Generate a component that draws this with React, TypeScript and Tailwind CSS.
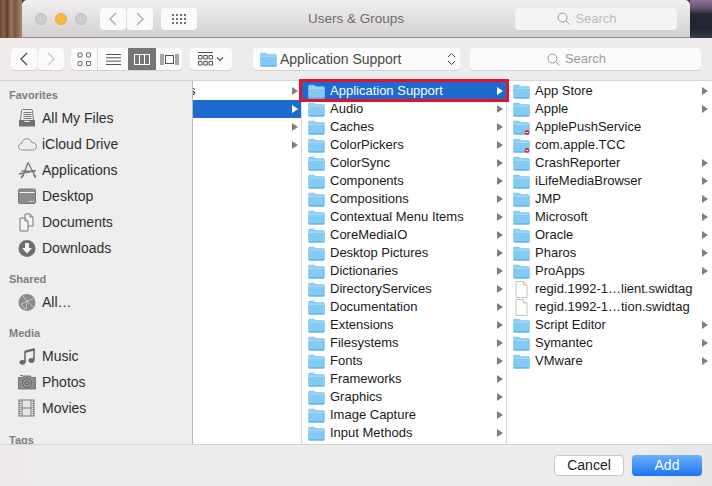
import type { ReactNode } from "react";

const font = "font-['Liberation_Sans','Noto_Sans',sans-serif]";

const col1 = [
  { name: "s", arrow: true },
  { name: "", arrow: true, active: true },
  { name: "", arrow: true },
  { name: "", arrow: true },
];

const col2 = [
  "Application Support",
  "Audio",
  "Caches",
  "ColorPickers",
  "ColorSync",
  "Components",
  "Compositions",
  "Contextual Menu Items",
  "CoreMediaIO",
  "Desktop Pictures",
  "Dictionaries",
  "DirectoryServices",
  "Documentation",
  "Extensions",
  "Filesystems",
  "Fonts",
  "Frameworks",
  "Graphics",
  "Image Capture",
  "Input Methods",
];

type Item = { name: string; kind?: "locked" | "file" };

const col3: Item[] = [
  { name: "App Store" },
  { name: "Apple" },
  { name: "ApplePushService", kind: "locked" },
  { name: "com.apple.TCC", kind: "locked" },
  { name: "CrashReporter" },
  { name: "iLifeMediaBrowser" },
  { name: "JMP" },
  { name: "Microsoft" },
  { name: "Oracle" },
  { name: "Pharos" },
  { name: "ProApps" },
  { name: "regid.1992-1…lient.swidtag", kind: "file" },
  { name: "regid.1992-1…tion.swidtag", kind: "file" },
  { name: "Script Editor" },
  { name: "Symantec" },
  { name: "VMware" },
];

function FolderIcon({ locked }: { locked?: boolean }) {
  return (
    <svg width="17" height="15" viewBox="0 0 17 15" className="shrink-0">
      <path d="M.5 2.200C.5 1.500 1 1 1.700 1h4c.5 0 .8.2 1.100.6l.7.9h8c.6 0 1 .4 1 1v9.900c0 .6-.4 1-1 1H1.500c-.6 0-1-.4-1-1z" fill="#8fd0f5" stroke="#79bfe9" strokeWidth=".5" />
      <path d="M.7 4.200h15.600v9.200c0 .5-.3.8-.8.8h-14c-.5 0-.8-.3-.8-.8z" fill="#84cbf4" />
      <path d="M.7 4.200h15.600v.8H.7z" fill="#a9dcf8" />
      <path d="M.7 13.200h15.600v.5c0 .3-.3.5-.8.5h-14c-.5 0-.8-.2-.8-.5z" fill="#5fb1e6" />
      {locked && <circle cx="14" cy="12.400" r="2.300" fill="#d8252c" />}
      {locked && <path d="M12.700 12h2.600v.9h-2.600z" fill="#fff" />}
    </svg>
  );
}

function FileIcon() {
  return (
    <svg width="17" height="17" viewBox="0 0 17 17" className="shrink-0">
      <path d="M3 .5h7.500L14 4v12.500H3z" fill="#fff" stroke="#c4c4c4" />
      <path d="M10.500.5V4H14" fill="#f1f1f1" stroke="#c4c4c4" />
    </svg>
  );
}

function Arrow({ white }: { white?: boolean }) {
  return (
    <svg width="6" height="8" viewBox="0 0 6 8" className="shrink-0">
      <path d="M0 0l6 4-6 4z" fill={white ? "#ffffff" : "#808080"} />
    </svg>
  );
}

function SidebarRow({ icon, label }: { icon: ReactNode; label: string }) {
  return (
    <div className="flex h-[26px] items-center pl-[18px]">
      <span className="flex w-[24px] shrink-0 items-center">{icon}</span>
      <span className="text-[14px] text-[#2e2e2e]">{label}</span>
    </div>
  );
}

function SidebarHead({ label, className }: { label: string; className: string }) {
  return <div className={`pl-[9px] text-[11px] leading-[13px] font-bold text-[#7f7f7f] ${className}`}>{label}</div>;
}

function Glyph({ children }: { children: ReactNode }) {
  return (
    <svg width="19" height="19" viewBox="0 0 19 19" className="overflow-visible">
      {children}
    </svg>
  );
}

const g = "#777777";

const icons: Record<string, ReactNode> = {
  files: (
    <Glyph>
      <path d="M3.500 1.500c0-.5.4-1 1-1h9c.6 0 1 .5 1 1l1 10h-13z" fill="#efefef" stroke={g} />
      <path d="M5.500 3.500h8M5.500 5.500h8M5.500 7.500h8M5.500 9.500h8" stroke={g} />
      <path d="M1 11h4.500l1 2h5l1-2H17v5.500c0 .6-.4 1-1 1H2c-.6 0-1-.4-1-1z" fill="#6f6f6f" />
    </Glyph>
  ),
  cloud: (
    <Glyph>
      <path d="M4.500 15C2 15 .5 13.500.5 11.600c0-1.900 1.500-3 3-3 .4-2.600 2.800-5 5.500-5 2.500 0 4.300 1.900 4.800 4 2.300-.3 4.700 1.300 4.700 4 0 2.100-1.600 3.400-3.500 3.400z" fill="none" stroke="#858585" strokeWidth=".9" />
    </Glyph>
  ),
  apps: (
    <Glyph>
      <path d="M10 1.500L5 15M10 1.500L17 15M1 13l17-3.500M3.500 10l13 .5" fill="none" stroke={g} strokeWidth="1.300" />
      <path d="M3 17l2.500-3M17.500 16.500L16 13.500" stroke={g} strokeWidth="1.800" />
    </Glyph>
  ),
  desktop: (
    <Glyph>
      <rect x=".5" y="2" width="17" height="14.500" rx="1.500" fill="#8c8c8c" stroke={g} />
      <rect x="1.500" y="5" width="15" height="1" fill="#f2f2f2" />
      <path d="M11 14h1v1h-1zM13 14h1v1h-1zM15 14h1v1h-1z" fill="#f2f2f2" />
    </Glyph>
  ),
  docs: (
    <Glyph>
      <path d="M7 1h5l3 3v9H7z" fill="#f2f2f2" stroke={g} />
      <path d="M2 5h5l3 3v10H2z" fill="#f2f2f2" stroke={g} />
      <path d="M7 5v3h3M12 1v3h3" fill="#dddddd" stroke={g} />
    </Glyph>
  ),
  downloads: (
    <Glyph>
      <circle cx="9" cy="9.500" r="8.500" fill="#6f6f6f" />
      <path d="M7 4h4v5h3l-5 5.500L4 9h3z" fill="#f4f4f4" />
    </Glyph>
  ),
  all: (
    <Glyph>
      <circle cx="9" cy="9.500" r="8.500" fill="#8a8a8a" />
      <path d="M5 3l4 5 6-2M9 8l-6 3 5 6 1-9 6 6" fill="none" stroke="#d6d6d6" strokeWidth=".8" />
    </Glyph>
  ),
  music: (
    <Glyph>
      <path d="M7 3.500L16.500 1v2.500L7 6z" fill="#6a6a6a" />
      <path d="M7 4v11M16 2v11" stroke="#6a6a6a" strokeWidth="1.600" />
      <ellipse cx="4.500" cy="15.300" rx="3" ry="2.400" fill="#6a6a6a" />
      <ellipse cx="13.500" cy="13.500" rx="3" ry="2.400" fill="#6a6a6a" />
    </Glyph>
  ),
  photos: (
    <Glyph>
      <path d="M.5 4.500h4l1-1.500h7l1 1.500h4v11.500H.5z" fill="#8c8c8c" stroke={g} />
      <path d="M2 2h3v1H2z" fill={g} />
      <circle cx="9" cy="10" r="4.300" fill="#b8b8b8" stroke="#555555" />
      <circle cx="9" cy="10" r="2.300" fill="#8c8c8c" stroke="#555555" />
    </Glyph>
  ),
  movies: (
    <Glyph>
      <rect x="1" y="1" width="15" height="16" fill="#e6e6e6" stroke={g} />
      <path d="M4 1v16M13 1v16M4 9h9" stroke={g} />
      <path d="M1.800 2v14.500M15.200 2v14.500" stroke={g} strokeWidth="1.400" strokeDasharray="1 1" />
    </Glyph>
  ),
};

function Btn({ className = "", children }: { className?: string; children?: ReactNode }) {
  return (
    <div className={`flex h-[22px] items-center justify-center rounded-[4px] bg-[#fbfbfb] shadow-[0_1px_0_#d2d2d2] ${className}`}>
      {children}
    </div>
  );
}

function Chevron({ dir, color }: { dir: "l" | "r"; color: string }) {
  return (
    <svg width="10" height="14" viewBox="0 0 10 14">
      <path d={dir === "l" ? "M8 1L2 7l6 6" : "M2 1l6 6-6 6"} fill="none" stroke={color} strokeWidth="1.300" />
    </svg>
  );
}

function Dots() {
  return (
    <svg width="15" height="10" viewBox="0 0 15 10" fill="#6f6f6f">
      <path d="M0 0h2v2H0zM4 0h2v2H4zM8 0h2v2H8zM12 0h2v2h-2zM0 4h2v2H0zM4 4h2v2H4zM8 4h2v2H8zM12 4h2v2h-2zM0 8h2v2H0zM4 8h2v2H4zM8 8h2v2H8zM12 8h2v2h-2z" />
    </svg>
  );
}

function Magnifier() {
  return (
    <svg width="13" height="13" viewBox="0 0 13 13" fill="none" stroke="#9a9a9a" strokeWidth="1">
      <circle cx="5.500" cy="5.500" r="4.500" />
      <path d="M9 9l3.500 3.500" />
    </svg>
  );
}

function TitleBar() {
  return (
    <div className="flex h-[38px] shrink-0 bg-[#3d3035]">
      <div className="w-[22px] bg-[linear-gradient(90deg,#6e4636_0px,#8a6450_4px,#5e3c2e_7px,#9a7660_11px,#7a5442_15px,#a88874_22px)]" />
      <div className="flex flex-1 items-center rounded-t-[5px] border-b border-b-[#8f8c8c] bg-[linear-gradient(180deg,#f1efef,#d3d0d0)] pl-[13px]">
        <div className="flex gap-[8px]">
          <span className="size-[12px] rounded-full border border-[#bdbdbd] bg-[#cfcdcd]" />
          <span className="size-[12px] rounded-full border border-[#e5a93a] bg-[#fcb940]" />
          <span className="size-[12px] rounded-full border border-[#bdbdbd] bg-[#cfcdcd]" />
        </div>
        <Btn className="ml-[13px] w-[26px]"><Chevron dir="l" color="#a9a9a9" /></Btn>
        <Btn className="ml-[1px] w-[26px]"><Chevron dir="r" color="#a9a9a9" /></Btn>
        <Btn className="ml-[8px] w-[36px]"><Dots /></Btn>
        <div className="w-[318px] pt-[1px] text-center text-[13.500px] text-[#6f6b6b]">Users &amp; Groups</div>
        <Btn className="w-[162px] gap-[5px] !bg-[#f4f3f3] pr-[18px]">
          <Magnifier />
          <span className="text-[13px] text-[#bdbdbd]">Search</span>
        </Btn>
      </div>
      <div className="w-[22px] bg-[linear-gradient(180deg,#8a6f95_0%,#6d5878_18%,#232733_38%,#1e2430_75%,#3a3d44_100%)]" />
    </div>
  );
}

function Toolbar() {
  return (
    <div className="flex h-[42px] shrink-0 items-center bg-[linear-gradient(90deg,#f0eaea,#ededed_30%,#eeecee)] pl-[11px]">
      <Btn className="w-[26px]"><Chevron dir="l" color="#4e4e4e" /></Btn>
      <Btn className="ml-[1px] w-[26px]"><Chevron dir="r" color="#c9c9c9" /></Btn>
      <Btn className="ml-[7px] w-[111px] !justify-start overflow-hidden">
        <span className="flex h-full w-[27px] items-center justify-center border-r border-r-[#dddddd]">
          <svg width="15" height="15" viewBox="0 0 15 15" fill="none" stroke="#666666">
            <rect x="1" y="1" width="4" height="4" rx=".5" />
            <rect x="9.500" y="1" width="4" height="4" rx=".5" />
            <rect x="1" y="9.500" width="4" height="4" rx=".5" />
            <rect x="9.500" y="9.500" width="4" height="4" rx=".5" />
          </svg>
        </span>
        <span className="flex h-full w-[30px] items-center justify-center">
          <svg width="15" height="11" viewBox="0 0 15 11" stroke="#555555">
            <path d="M0 .5h15M0 3.800h15M0 7.100h15M0 10.500h15" />
          </svg>
        </span>
        <span className="flex h-full w-[28px] items-center justify-center bg-[#757575]">
          <svg width="17" height="11" viewBox="0 0 17 11" fill="none" stroke="#ffffff">
            <rect x=".5" y=".5" width="15" height="10" />
            <path d="M5.500 0v11M10.500 0v11" />
          </svg>
        </span>
        <span className="flex h-full w-[26px] items-center justify-center">
          <svg width="19" height="11" viewBox="0 0 19 11" fill="none" stroke="#555555">
            <rect x="5.500" y="1.500" width="8" height="8" />
            <path d="M1 0v11M3 0v11M16 0v11M18 0v11" />
          </svg>
        </span>
      </Btn>
      <Btn className="ml-[8px] w-[42px] gap-[3px]">
        <svg width="15" height="14" viewBox="0 0 15 14" fill="none" stroke="#555555">
          <path d="M0 .5h15" />
          <path d="M.5 3.500h3.500v3.500H.5zM5.800 3.500h3.500v3.500H5.800zM11 3.500h3.500v3.500H11zM.5 9.500h3.500v3.500H.5zM5.800 9.500h3.500v3.500H5.800zM11 9.500h3.500v3.500H11z" />
        </svg>
        <svg width="8" height="5" viewBox="0 0 8 5" fill="none" stroke="#555555" strokeWidth="1.200">
          <path d="M1 .5l3 3 3-3" />
        </svg>
      </Btn>
      <Btn className="ml-[21px] w-[207px] !justify-start pl-[7px]">
        <FolderIcon />
        <span className="ml-[3px] flex-1 text-[14px] text-[#4a4a4a]">Application Support</span>
        <svg width="9" height="14" viewBox="0 0 9 14" fill="none" stroke="#444444" className="mr-[4px]">
          <path d="M1 5l3.500-3.500L8 5M1 9l3.500 3.500L8 9" />
        </svg>
      </Btn>
      <Btn className="ml-[10px] w-[231px] gap-[5px] pr-[18px]">
        <Magnifier />
        <span className="text-[13px] text-[#9d9d9d]">Search</span>
      </Btn>
    </div>
  );
}

function Sidebar() {
  return (
    <aside className="w-[193px] shrink-0 overflow-hidden border-r border-r-[#b9b9b9] bg-[#eeeeee] pt-[8px]">
      <SidebarHead label="Favorites" className="mb-[3px]" />
      <SidebarRow icon={icons.files} label="All My Files" />
      <SidebarRow icon={icons.cloud} label="iCloud Drive" />
      <SidebarRow icon={icons.apps} label="Applications" />
      <SidebarRow icon={icons.desktop} label="Desktop" />
      <SidebarRow icon={icons.docs} label="Documents" />
      <SidebarRow icon={icons.downloads} label="Downloads" />
      <SidebarHead label="Shared" className="mt-[12px] mb-[3px]" />
      <SidebarRow icon={icons.all} label="All…" />
      <SidebarHead label="Media" className="mt-[12px] mb-[3px]" />
      <SidebarRow icon={icons.music} label="Music" />
      <SidebarRow icon={icons.photos} label="Photos" />
      <SidebarRow icon={icons.movies} label="Movies" />
      <SidebarHead label="Tags" className="mt-[13px]" />
    </aside>
  );
}

function Columns() {
  return (
    <div className="relative flex min-w-0 flex-1 bg-white pt-[1px] text-[13px] text-[#1a1a1a]">
      {/* first column is scrolled sideways, only the tail of a name shows */}
      <div className="w-[109px] shrink-0 overflow-hidden border-r border-r-[#d9d9d9]">
        {col1.map((r, i) => (
          <div key={i} className={`flex h-[18px] items-center justify-between pr-[3px] ${r.active ? "bg-[#1e6bd0]" : ""}`}>
            <span className="-ml-[4px] leading-[18px]">{r.name}</span>
            <Arrow white={r.active} />
          </div>
        ))}
      </div>
      <div className="w-[205px] shrink-0 overflow-hidden border-r border-r-[#d9d9d9]">
        {col2.map((name, i) => (
          <div key={name} className={`flex h-[18px] items-center pl-[6px] pr-[3px] ${i === 0 ? "bg-[#1e6bd0] text-white" : ""}`}>
            <FolderIcon />
            <span className="ml-[5px] flex-1">{name}</span>
            <Arrow white={i === 0} />
          </div>
        ))}
        {/* next row is scrolled out, only its folder tab peeks in */}
        <div className="flex h-[18px] items-center pl-[6px]">
          <FolderIcon />
        </div>
      </div>
      <div className="min-w-0 flex-1">
        {col3.map((r) => (
          <div key={r.name} className="flex h-[18px] items-center pl-[6px] pr-[4px]">
            {r.kind === "file" ? <FileIcon /> : <FolderIcon locked={r.kind === "locked"} />}
            <span className="ml-[5px] flex-1 whitespace-nowrap">{r.name}</span>
            {!r.kind && <Arrow />}
          </div>
        ))}
      </div>
      {/* red annotation box from the screenshot */}
      <div className="absolute top-[-2px] left-[106px] h-[23px] w-[210px] border-[3px] border-[#e8112d]" />
    </div>
  );
}

function Footer() {
  return (
    <div className="flex h-[42px] shrink-0 items-center justify-end gap-[8px] border-t border-t-[#d4d4d4] bg-[linear-gradient(90deg,#eeeaea,#ececec_25%,#ececec_90%,#e6e6e6)] pr-[10px] text-[13px]">
      <div className="flex h-[21px] w-[70px] items-center justify-center rounded-[4px] border border-[#c8c8c8] bg-white text-[14px] text-[#1c1c1c]">Cancel</div>
      <div className="flex h-[21px] w-[70px] items-center justify-center rounded-[4px] bg-[linear-gradient(180deg,#6db3fa,#1b72f5)] text-[14px] text-white">Add</div>
    </div>
  );
}

export default function App() {
  return (
    <div className={`flex h-[486px] w-[712px] flex-col overflow-hidden bg-[#ededed] ${font}`}>
      <TitleBar />
      <Toolbar />
      <div className="flex min-h-0 flex-1 border-t border-t-[#d6d6d6]">
        <Sidebar />
        <Columns />
      </div>
      <Footer />
    </div>
  );
}
